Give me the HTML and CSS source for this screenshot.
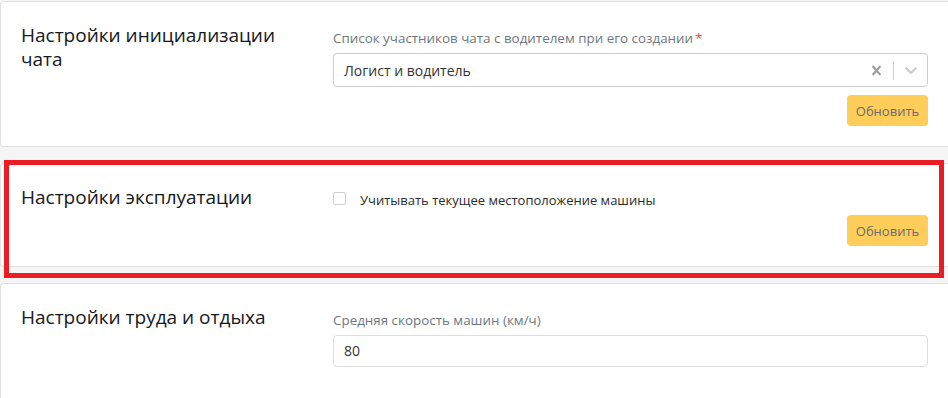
FILE: index.html
```html
<!DOCTYPE html>
<html lang="ru">
<head>
<meta charset="utf-8">
<title>Настройки</title>
<link rel="stylesheet" href="styles.css">
</head>
<body>
<div class="page">
  <section class="card">
    <h2 class="card-title">Настройки инициализации чата</h2>
    <div class="card-body">
      <label class="field-label">Список участников чата с водителем при его создании<span class="req">*</span></label>
      <div class="select">
        <span class="select-value">Логист и водитель</span>
        <span class="ind ind-clear">
          <svg width="20" height="20" viewBox="0 0 20 20"><path d="M14.348 14.849c-0.469 0.469-1.229 0.469-1.697 0l-2.651-3.030-2.651 3.029c-0.469 0.469-1.229 0.469-1.697 0-0.469-0.469-0.469-1.229 0-1.697l2.758-3.15-2.759-3.152c-0.469-0.469-0.469-1.228 0-1.697s1.228-0.469 1.697 0l2.652 3.031 2.651-3.031c0.469-0.469 1.228-0.469 1.697 0s0.469 1.229 0 1.697l-2.758 3.152 2.758 3.15c0.469 0.469 0.469 1.229 0 1.698z"/></svg>
        </span>
        <span class="ind-sep"></span>
        <span class="ind ind-drop">
          <svg width="20" height="20" viewBox="0 0 20 20"><path d="M4.516 7.548c0.436-0.446 1.043-0.481 1.576 0l3.908 3.747 3.908-3.747c0.533-0.481 1.141-0.446 1.574 0 0.436 0.445 0.408 1.197 0 1.615-0.406 0.418-4.695 4.502-4.695 4.502-0.217 0.223-0.502 0.335-0.787 0.335s-0.57-0.112-0.789-0.335c0 0-4.287-4.084-4.695-4.502s-0.436-1.170 0-1.615z"/></svg>
        </span>
      </div>
      <div class="actions"><button class="btn">Обновить</button></div>
    </div>
  </section>

  <section class="card">
    <h2 class="card-title">Настройки эксплуатации</h2>
    <div class="card-body">
      <label class="check-row"><span class="checkbox"></span><span class="check-label">Учитывать текущее местоположение машины</span></label>
      <div class="actions"><button class="btn">Обновить</button></div>
    </div>
  </section>

  <section class="card card-last">
    <h2 class="card-title">Настройки труда и отдыха</h2>
    <div class="card-body">
      <label class="field-label">Средняя скорость машин (км/ч)</label>
      <div class="input">80</div>
    </div>
  </section>

  <div class="highlight"></div>
</div>
</body>
</html>
```

FILE: styles.css
```css
html, body {
  margin: 0;
  padding: 0;
  background: #f5f5f5;
  overflow: hidden;
}
body {
  font-family: "Open Sans", "Noto Sans", sans-serif;
  color: #212529;
}
.page {
  position: relative;
  box-sizing: border-box;
  height: 100vh;
  padding-top: 1px;
  display: flex;
  flex-direction: column;
  gap: 16px;
}
.card {
  background: #fff;
  border: 1px solid #e0e0e0;
  border-right: 0;
  border-radius: 4px 0 0 4px;
  padding: 21px 20px 20px 20px;
  display: grid;
  grid-template-columns: 312px 1fr;
  align-items: start;
}
.card-last {
  flex: 1;
  border-bottom: 0;
  border-radius: 4px 0 0 0;
  padding-bottom: 0;
}
.card-title {
  margin: 0;
  font-size: 19px;
  line-height: 24px;
  font-weight: 400;
  color: #15181c;
  padding-right: 20px;
}
.card-body {
  margin-top: 6px;
  display: flex;
  flex-direction: column;
}
.field-label {
  display: block;
  font-size: 13.4px;
  line-height: 18px;
  color: #6f7780;
  margin-bottom: 6px;
}
.req {
  color: #e74c4c;
  margin-left: 2px;
}
.select {
  height: 34px;
  box-sizing: border-box;
  border: 1px solid #cccccc;
  border-radius: 4px;
  display: flex;
  align-items: center;
  padding-left: 10px;
}
.select-value {
  flex: 1;
  font-size: 14px;
  color: #333;
}
.ind {
  display: flex;
  align-items: center;
}
.ind svg { display: block; }
.ind-clear svg { fill: #a0a0a0; width: 19px; height: 19px; }
.ind-clear { padding: 0 7px; }
.ind-sep {
  width: 1px;
  height: 19px;
  background: #cccccc;
}
.ind-drop { padding: 0 6px 0 7px; }
.ind-drop svg { fill: #cccccc; }
.actions {
  display: flex;
  justify-content: flex-end;
  margin-top: 8px;
}
.btn {
  width: 81px;
  height: 31px;
  border: 0;
  border-radius: 4px;
  background: #ffcd5a;
  color: #6b6b6b;
  font-family: inherit;
  font-size: 13px;
  padding: 0;
}
.check-row {
  display: flex;
  align-items: center;
  height: 18px;
  font-size: 13px;
  line-height: 18px;
  color: #2b2b2b;
}
.checkbox {
  width: 11px;
  height: 11px;
  border: 1px solid #cfcfcf;
  border-radius: 2px;
  margin-right: 14px;
  margin-top: -4px;
}
.card-body .check-row + .actions { margin-top: 6px; }
.input {
  height: 32px;
  box-sizing: border-box;
  border: 1px solid #dedede;
  border-radius: 4px;
  padding-left: 10px;
  font-size: 14px;
  line-height: 30px;
  color: #333;
}
.highlight {
  position: absolute;
  left: 4px;
  top: 160px;
  width: 940px;
  height: 118px;
  box-sizing: border-box;
  border: 5px solid #ec1c24;
}
```
